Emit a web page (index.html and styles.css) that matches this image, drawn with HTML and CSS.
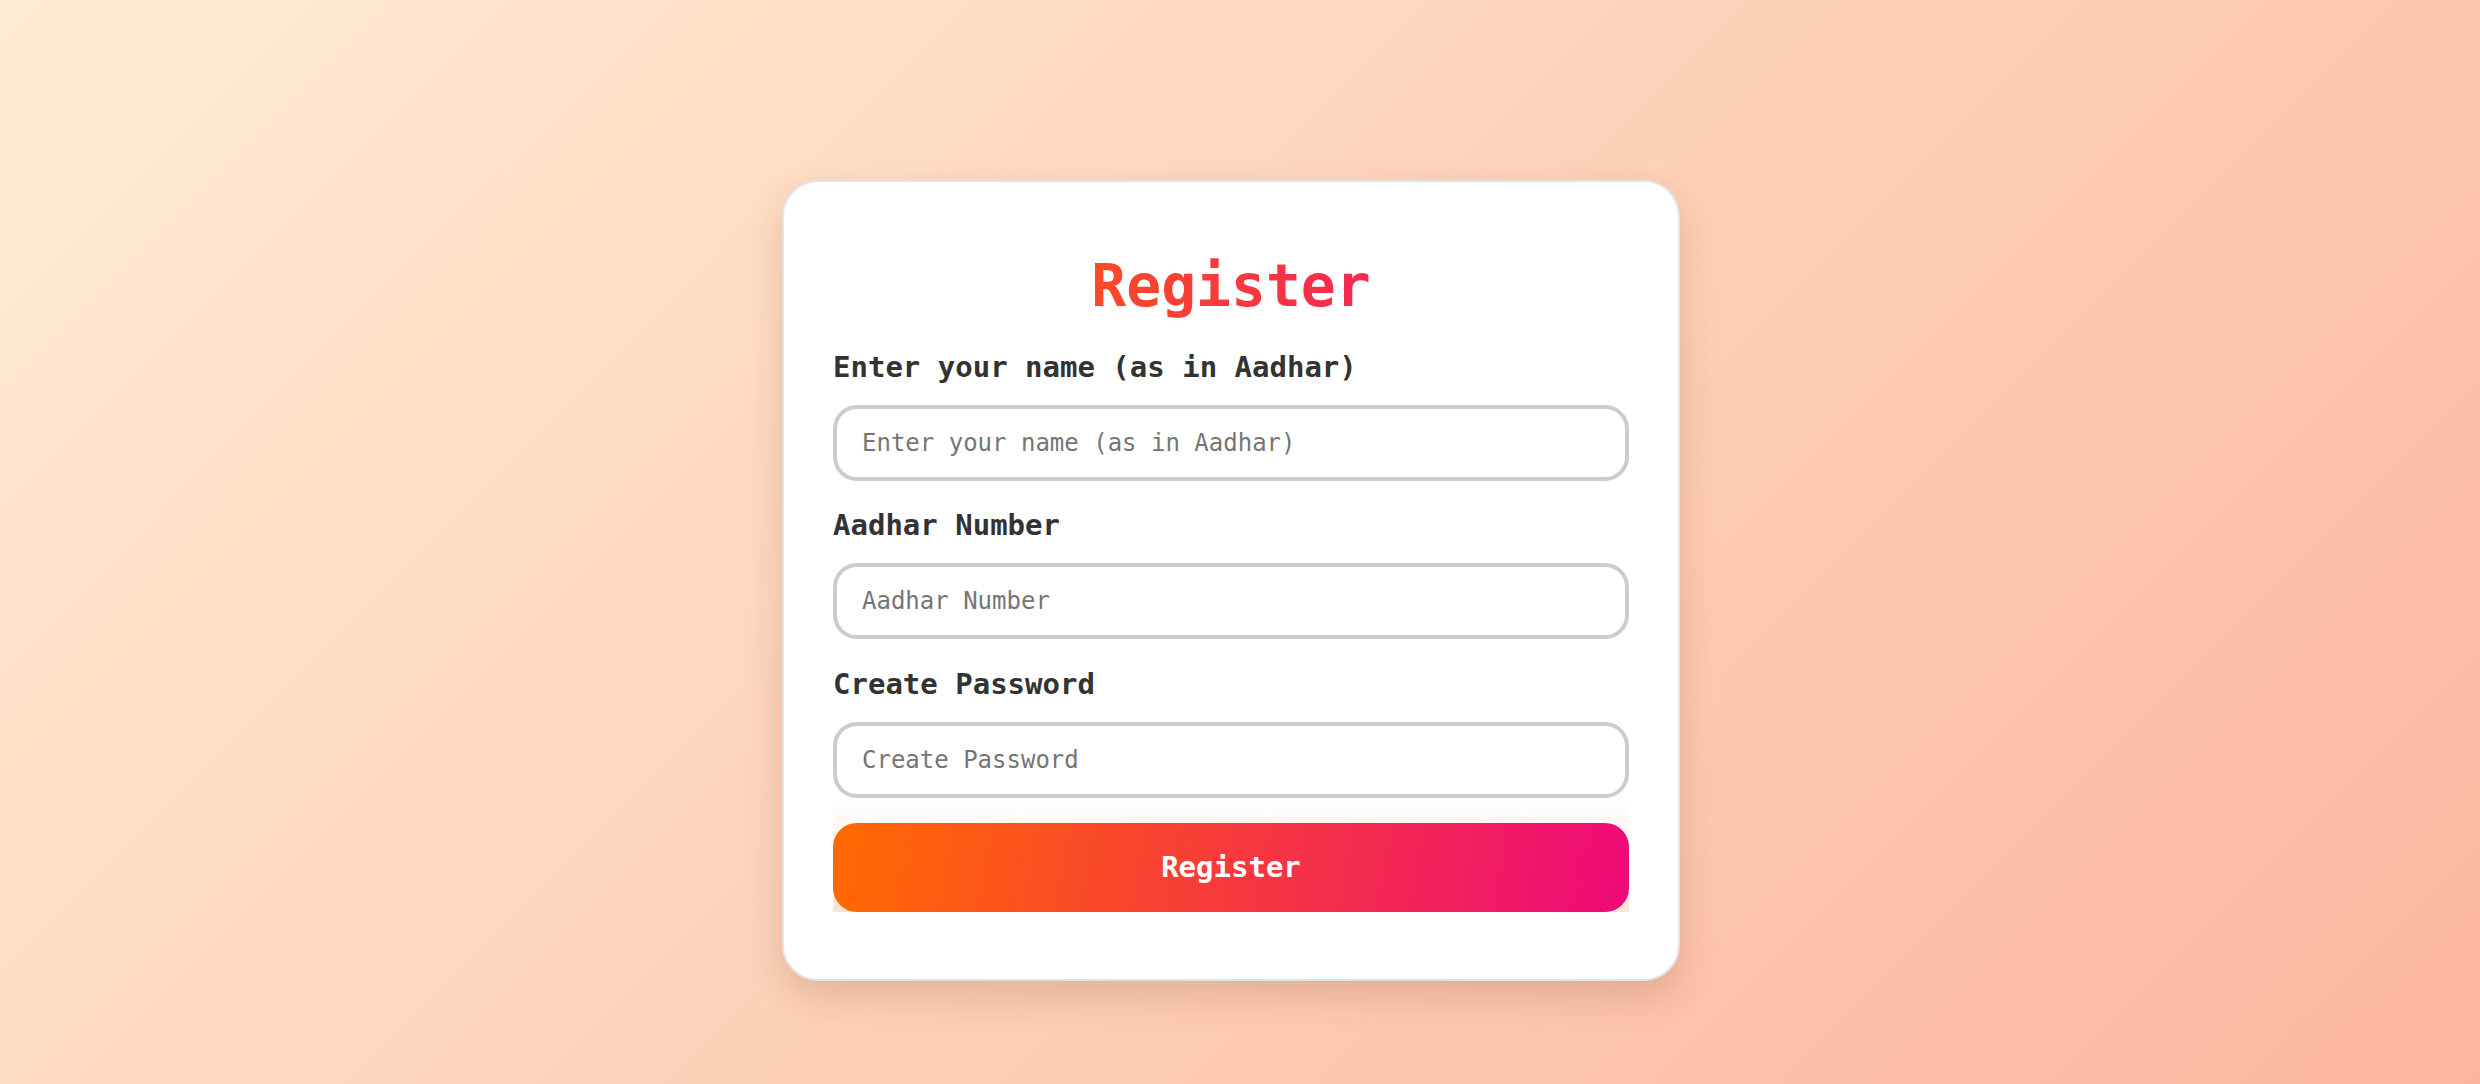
FILE: index.html
```html
<!DOCTYPE html>
<html lang="en">
<head>
<meta charset="UTF-8">
<title>Register</title>
<link rel="stylesheet" href="styles.css">
</head>
<body>
  <main class="page">
    <form class="card">
      <h1 class="title">Register</h1>
      <div class="field">
        <label class="label" for="name">Enter your name (as in Aadhar)</label>
        <input class="input" id="name" type="text" placeholder="Enter your name (as in Aadhar)">
      </div>
      <div class="field">
        <label class="label" for="aadhar">Aadhar Number</label>
        <input class="input" id="aadhar" type="text" placeholder="Aadhar Number">
      </div>
      <div class="field">
        <label class="label" for="pass">Create Password</label>
        <input class="input" id="pass" type="password" placeholder="Create Password">
      </div>
      <div class="btn-wrap">
        <button class="btn" type="button">Register</button>
      </div>
    </form>
  </main>
</body>
</html>
```
FILE: styles.css
```css
* { box-sizing: border-box; }
html, body { margin: 0; padding: 0; }
body {
  height: 1084px;
  background: linear-gradient(135deg, #ffecd2 0%, #fcb69f 100%);
  font-family: "DejaVu Sans Mono", "Liberation Mono", monospace;
  overflow: hidden;
}
.page {
  height: 1084px;
  display: flex;
  justify-content: center;
  align-items: center;
  padding: 76px 18px 0 0;
}
.card {
  width: 898px;
  background: #fff;
  border: 2px solid #e6e2e0;
  border-radius: 36px;
  padding: 70px 49px 67px 49px;
  box-shadow: 0 16px 36px rgba(90, 40, 10, 0.16);
}
.title {
  margin: 0;
  font-size: 58px;
  line-height: 68px;
  font-weight: bold;
  text-align: center;
  background: linear-gradient(90deg, #ff6a00, #ee0979);
  -webkit-background-clip: text;
  background-clip: text;
  color: transparent;
}
.field {
  display: flex;
  flex-direction: column;
  margin-top: 29px;
}
.field + .field { margin-top: 26.5px; }
.label {
  font-size: 29px;
  line-height: 36px;
  font-weight: bold;
  color: #333;
  margin-bottom: 20px;
}
.input {
  width: 100%;
  height: 76px;
  border: 4px solid #cccccc;
  border-radius: 24px;
  padding: 0 25px;
  font-family: "DejaVu Sans Mono", "Liberation Mono", monospace;
  font-size: 24px;
  color: #333;
  background: #fff;
  outline: none;
}
.input::placeholder { color: #757575; }
.btn-wrap {
  margin-top: 4px;
  padding-top: 21px;
  background: linear-gradient(180deg, #ffffff 0%, #fdf0e6 40%, #fde4d2 100%);
}
.btn {
  display: block;
  width: 100%;
  height: 89px;
  border: none;
  border-radius: 24px;
  background: linear-gradient(100deg, #ff6a00 0%, #ee0979 100%);
  color: #fff;
  font-family: "DejaVu Sans Mono", "Liberation Mono", monospace;
  font-size: 29px;
  font-weight: bold;
  cursor: pointer;
}
```
